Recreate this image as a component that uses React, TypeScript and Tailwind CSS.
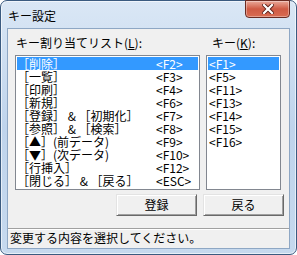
const assigned = [
    { name: '［削除］', key: '<F2>' },
    { name: '［一覧］', key: '<F3>' },
    { name: '［印刷］', key: '<F4>' },
    { name: '［新規］', key: '<F6>' },
    { name: '［登録］ & ［初期化］', key: '<F7>' },
    { name: '［参照］ & ［検索］', key: '<F8>' },
    { name: '［▲］(前データ)', key: '<F9>' },
    { name: '［▼］(次データ)', key: '<F10>' },
    { name: '［行挿入］', key: '<F12>' },
    { name: '［閉じる］ & ［戻る］', key: '<ESC>' }
]

const freeKeys = ['<F1>', '<F5>', '<F11>', '<F13>', '<F14>', '<F15>', '<F16>']

const btn =
    'w-[81px] h-[22px] flex items-center justify-center bg-[#f0f0f0] border border-t-[#e3e3e3] border-l-[#e3e3e3] border-r-[#696969] border-b-[#696969] shadow-[inset_1px_1px_0_#ffffff,inset_-1px_-1px_0_#a0a0a0] text-[12px] leading-[14px] text-black'

const App = () => {
    return (
        <div className="w-[297px] h-[255px] bg-white font-['Noto_Sans_CJK_JP','Noto_Sans',sans-serif] text-black">
            <div className="w-[297px] h-[255px] flex flex-col rounded-[7px] border border-[#3b5b80] bg-gradient-to-b from-[#dae7f5] via-[#bfd4ec] to-[#c6d9ee] shadow-[inset_0_0_0_1px_rgba(255,255,255,0.6)]">
                {/* Title bar */}
                <div className="h-[27px] flex items-start justify-between">
                    <span className="mt-[8px] ml-[7px] text-[12px] leading-[14px]">キー設定</span>
                    <div className="w-[45px] h-[18px] mr-[6px] -mt-px flex items-center justify-center rounded-b-[4px] border border-[#6a2b22] bg-gradient-to-b from-[#e9a99a] via-[#cf5a44] to-[#d96c52] shadow-[inset_0_0_0_1px_rgba(255,255,255,0.35)]">
                        <svg width="12" height="10" viewBox="0 0 12 10">
                            <path d="M2 1 L10 9 M10 1 L2 9" stroke="#5a1f18" strokeWidth="4" strokeLinecap="square" />
                            <path d="M2 1 L10 9 M10 1 L2 9" stroke="#ffffff" strokeWidth="2.2" strokeLinecap="square" />
                        </svg>
                    </div>
                </div>

                {/* Client area */}
                <div className="mx-[6px] h-[221px] flex flex-col border border-[#8ea7c4] bg-[#f0f0f0]">
                    <div className="flex pl-[7px]">
                        {/* Assigned list */}
                        <div className="w-[185px] flex flex-col">
                            <div className="h-[26px] pt-[7px] pl-[1px] text-[12px] leading-[14px] whitespace-nowrap">
                                キー割り当てリスト(<span className="underline">L</span>):
                            </div>
                            <div className="h-[135px] border border-[#828790] bg-white p-px">
                                {assigned.map((row, i) => (
                                    <div
                                        key={row.key}
                                        className={`h-[13px] flex text-[12px] leading-[13px] whitespace-nowrap ${i === 0 ? 'bg-[#3399ff] text-white' : ''}`}
                                    >
                                        <span className="w-[139px]">{row.name}</span>
                                        <span>{row.key}</span>
                                    </div>
                                ))}
                            </div>
                        </div>

                        {/* Free keys */}
                        <div className="w-[75px] ml-[6px] flex flex-col">
                            <div className="h-[26px] pt-[7px] pl-[6px] text-[12px] leading-[14px] whitespace-nowrap">
                                キー(<span className="underline">K</span>):
                            </div>
                            <div className="h-[135px] border border-[#828790] bg-white p-px">
                                {freeKeys.map((k, i) => (
                                    <div
                                        key={k}
                                        className={`h-[13px] pl-[1px] text-[12px] leading-[13px] ${i === 0 ? 'bg-[#3399ff] text-white' : ''}`}
                                    >
                                        {k}
                                    </div>
                                ))}
                            </div>
                        </div>
                    </div>

                    {/* Buttons */}
                    <div className="mt-[4px] flex pl-[108px] gap-[6px]">
                        <button className={btn}>登録</button>
                        <button className={btn}>戻る</button>
                    </div>

                    {/* Status bar */}
                    <div className="mt-[12px] flex-1 border-t border-[#a0a0a0] pt-[2px] pl-[2px] text-[12px] leading-[14px] shadow-[inset_0_1px_0_#ffffff]">
                        変更する内容を選択してください。
                    </div>
                </div>
            </div>
        </div>
    )
}

export default App
